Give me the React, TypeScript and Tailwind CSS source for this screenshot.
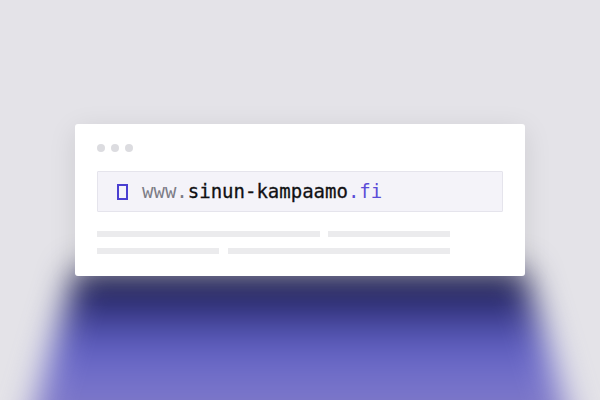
export default function App() {
  return (
    <div className="relative w-[600px] h-[400px] overflow-hidden bg-[#e4e3e8]">
      {/* glow beam below the card */}
      <div className="absolute left-0 top-[270px] w-[600px] h-[180px] blur-[16px]">
        <div
          className="w-full h-full bg-[linear-gradient(to_bottom,#15163a_0%,#2f3078_18%,#5d5dbf_40%,#7572cb_62%,#8a80c3_100%)]"
          style={{ clipPath: "polygon(76px 0, 524px 0, 578px 180px, 22px 180px)" }}
        />
      </div>

      <div className="relative flex justify-center pt-[124px]">
        <div className="w-[450px] bg-white rounded-[3px] shadow-[0_6px_28px_rgba(0,0,0,0.10)] px-[22px] pt-[20px] pb-[22px]">
          <div className="flex gap-[6px]">
            <span className="w-[8px] h-[8px] rounded-full bg-[#dcdce0]" />
            <span className="w-[8px] h-[8px] rounded-full bg-[#dcdce0]" />
            <span className="w-[8px] h-[8px] rounded-full bg-[#dcdce0]" />
          </div>

          <div className="mt-[19px] h-[41px] flex items-center bg-[#f4f3f9] border border-[#e5e4ec] rounded-[1px] pl-[19px]">
            <span className="w-[11px] h-[16px] border-2 border-[#4a3fd1] mr-[14px]" />
            <span className="text-[19px] leading-none font-['DejaVu_Sans_Mono',monospace]">
              <span className="text-[#7c7c86]">www.</span>
              <span className="text-[#111114] [-webkit-text-stroke:0.3px_#111114]">sinun-kampaamo</span>
              <span className="text-[#5a4cd8]">.fi</span>
            </span>
          </div>

          <div className="mt-[19px] flex gap-[8px]">
            <div className="w-[223px] h-[6px] bg-[#ebebed]" />
            <div className="w-[122px] h-[6px] bg-[#ebebed]" />
          </div>
          <div className="mt-[11px] flex gap-[9px]">
            <div className="w-[122px] h-[6px] bg-[#ebebed]" />
            <div className="w-[222px] h-[6px] bg-[#ebebed]" />
          </div>
        </div>
      </div>
    </div>
  );
}
